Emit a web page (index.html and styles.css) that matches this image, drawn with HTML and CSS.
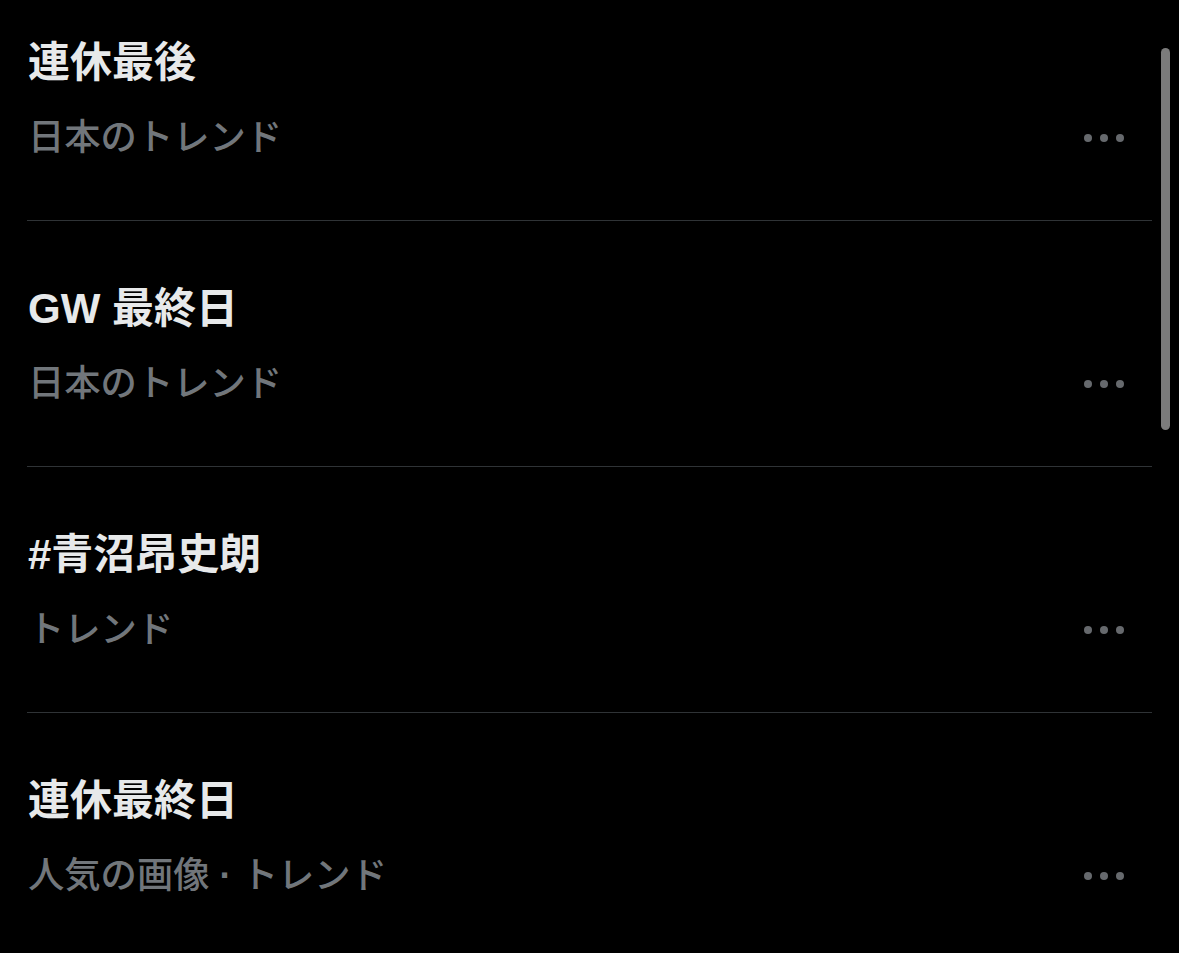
FILE: index.html
```html
<!DOCTYPE html>
<html lang="ja">
<head>
<meta charset="utf-8">
<title>トレンド</title>
<link rel="stylesheet" href="styles.css">
</head>
<body>
<main class="page">
  <ul class="trends">
    <li class="trend">
      <div class="trend-title">連休最後</div>
      <div class="trend-meta">
        <span class="trend-context">日本のトレンド</span>
        <svg class="more" viewBox="0 0 40 8" width="40" height="8" aria-hidden="true"><circle cx="4" cy="4" r="4"/><circle cx="20" cy="4" r="4"/><circle cx="36" cy="4" r="4"/></svg>
      </div>
    </li>
    <li class="trend">
      <div class="trend-title">GW 最終日</div>
      <div class="trend-meta">
        <span class="trend-context">日本のトレンド</span>
        <svg class="more" viewBox="0 0 40 8" width="40" height="8" aria-hidden="true"><circle cx="4" cy="4" r="4"/><circle cx="20" cy="4" r="4"/><circle cx="36" cy="4" r="4"/></svg>
      </div>
    </li>
    <li class="trend">
      <div class="trend-title">#青沼昂史朗</div>
      <div class="trend-meta">
        <span class="trend-context">トレンド</span>
        <svg class="more" viewBox="0 0 40 8" width="40" height="8" aria-hidden="true"><circle cx="4" cy="4" r="4"/><circle cx="20" cy="4" r="4"/><circle cx="36" cy="4" r="4"/></svg>
      </div>
    </li>
    <li class="trend">
      <div class="trend-title">連休最終日</div>
      <div class="trend-meta">
        <span class="trend-context">人気の画像 <span class="sep">·</span> トレンド</span>
        <svg class="more" viewBox="0 0 40 8" width="40" height="8" aria-hidden="true"><circle cx="4" cy="4" r="4"/><circle cx="20" cy="4" r="4"/><circle cx="36" cy="4" r="4"/></svg>
      </div>
    </li>
  </ul>
  <div class="scrollbar"></div>
</main>
</body>
</html>
```

FILE: styles.css
```css
html, body {
  margin: 0;
  padding: 0;
  background: #000;
}
body {
  font-family: "Liberation Sans", "Noto Sans CJK JP", sans-serif;
  color: #e7e9ea;
  overflow: hidden;
}
.page {
  position: relative;
  width: 1179px;
  height: 953px;
  overflow: hidden;
}
.trends {
  list-style: none;
  margin: 0 0 0 27px;
  padding: 0;
  width: 1125px;
}
.trend {
  padding: 64px 28px 60px 1px;
  border-bottom: 1px solid #2f3336;
}
.trend:first-child {
  padding-top: 39px;
}
.trend-title {
  font-size: 42px;
  line-height: 48px;
  font-weight: 700;
  color: #e7e9ea;
  white-space: nowrap;
}
.trend-meta {
  margin-top: 29px;
  height: 44px;
  display: flex;
  align-items: center;
  justify-content: space-between;
}
.trend-context {
  font-size: 36.3px;
  line-height: 44px;
  font-weight: 500;
  color: #71767b;
  white-space: nowrap;
}
.sep {
  font-weight: 700;
}
.more {
  display: block;
  fill: #66696d;
}
.scrollbar {
  position: absolute;
  left: 1161px;
  top: 48px;
  width: 9px;
  height: 382px;
  border-radius: 5px;
  background: #7b7b7b;
}
```
